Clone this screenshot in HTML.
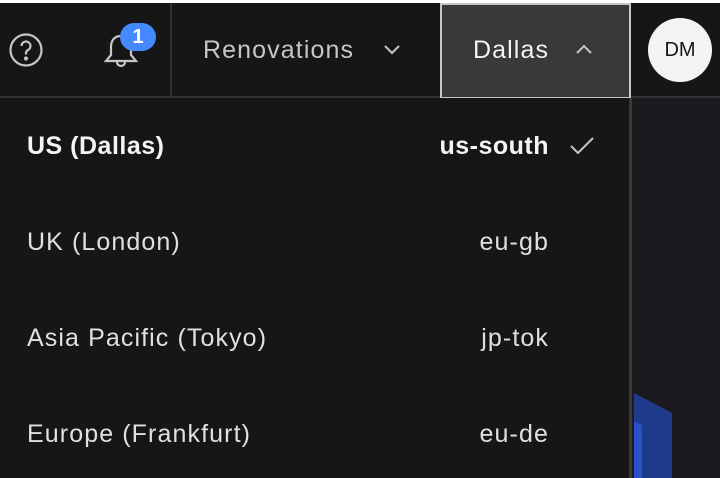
<!DOCTYPE html>
<html><head><style>
*{margin:0;padding:0;box-sizing:border-box}
body{width:720px;height:478px;background:#fff;overflow:hidden;position:relative;font-family:"Liberation Sans",sans-serif;color:#f4f4f4}
.hdr{position:absolute;left:0;top:3px;width:720px;height:95px;background:#161616;border-bottom:2px solid #333}
.div{position:absolute;top:3px;width:2px;height:95px;background:#333}
.t{position:absolute;font-size:25px;line-height:28px;white-space:nowrap;letter-spacing:1.1px}
.panel{position:absolute;left:0;top:98px;width:632px;height:380px;background:#161616;border-right:3px solid #393939}
.right{position:absolute;left:632px;top:98px;width:88px;height:380px;background:#1c1a1f}
</style></head><body>
<div class="hdr"></div>
<div class="div" style="left:170px"></div>
<svg style="position:absolute;left:8px;top:32px" width="36" height="36" viewBox="0 0 36 36" fill="none" stroke="#c6c6c6" stroke-width="2.2"><circle cx="18" cy="18" r="15.5"/><path d="M13.5 14a4.5 4.5 0 1 1 6.5 4c-1.4.8-2 1.6-2 3v1.5"/><circle cx="18" cy="26.5" r="1" fill="#c6c6c6"/></svg>
<svg style="position:absolute;left:102px;top:28px" width="40" height="46" viewBox="0 0 40 46" fill="none" stroke="#c6c6c6" stroke-width="2.2"><path d="M19 8c-7 0-10 5-10 11v8l-5 6h30l-5-6v-8c0-6-3-11-10-11z"/><path d="M15 34a4 4 0 0 0 8 0"/></svg>
<div style="position:absolute;left:120px;top:23px;width:36px;height:28px;border-radius:14px;background:#4589ff;color:#fff;font-weight:bold;font-size:20px;text-align:center;line-height:28px">1</div>
<div class="t" style="left:203px;top:36px;color:#c6c6c6">Renovations</div>
<svg style="position:absolute;left:382px;top:42px" width="20" height="14" viewBox="0 0 20 14" fill="none" stroke="#c6c6c6" stroke-width="2"><path d="M3 4l7 7 7-7"/></svg>
<div style="position:absolute;left:440px;top:3px;width:191px;height:96px;background:#393939;border:2px solid #c6c6c6"></div>
<div class="t" style="left:473px;top:36px;color:#f4f4f4">Dallas</div>
<svg style="position:absolute;left:574px;top:42px" width="20" height="14" viewBox="0 0 20 14" fill="none" stroke="#c6c6c6" stroke-width="2"><path d="M3 11l7-7 7 7"/></svg>
<div style="position:absolute;left:648px;top:18px;width:64px;height:64px;border-radius:50%;background:#f4f4f4;color:#161616;font-size:20px;text-align:center;line-height:64px">DM</div>
<div class="right"></div>
<div class="panel"></div>
<svg style="position:absolute;left:634px;top:393px" width="40" height="85"><path d="M0 0L38 20V85H0z" fill="#1e3a8a"/><path d="M0 28L8 32V85H0z" fill="#2850c8"/></svg>
<div class="t" style="left:27px;top:132px;font-weight:bold;letter-spacing:0.5px">US (Dallas)</div>
<div class="t" style="right:171px;top:132px;font-weight:bold;letter-spacing:0.5px">us-south</div>
<svg style="position:absolute;left:569px;top:136px" width="26" height="20" viewBox="0 0 26 20" fill="none" stroke="#c6c6c6" stroke-width="2"><path d="M2 10l7 7L24 2"/></svg>
<div class="t" style="left:27px;top:228px;color:#e0e0e0">UK (London)</div>
<div class="t" style="right:171px;top:228px;color:#e0e0e0">eu-gb</div>
<div class="t" style="left:27px;top:324px;color:#e0e0e0">Asia Pacific (Tokyo)</div>
<div class="t" style="right:171px;top:324px;color:#e0e0e0">jp-tok</div>
<div class="t" style="left:27px;top:420px;color:#e0e0e0">Europe (Frankfurt)</div>
<div class="t" style="right:171px;top:420px;color:#e0e0e0">eu-de</div>
</body></html>
